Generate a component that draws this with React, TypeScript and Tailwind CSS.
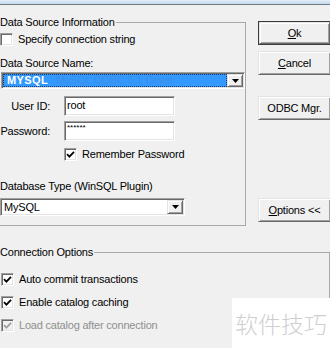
import React from 'react';

const sunken =
  'border border-t-[#a0a0a0] border-l-[#a0a0a0] border-r-white border-b-white shadow-[inset_1px_1px_0_#696969,inset_-1px_-1px_0_#e3e3e3]';
const raised =
  'border border-t-[#e3e3e3] border-l-[#e3e3e3] border-r-[#696969] border-b-[#696969] shadow-[inset_1px_1px_0_#ffffff,inset_-1px_-1px_0_#a0a0a0]';

const Check: React.FC<{ checked?: boolean; disabled?: boolean }> = ({ checked, disabled }) => (
  <div
    className={`w-[13px] h-[13px] shrink-0 flex items-center justify-center ${sunken} ${
      disabled ? 'bg-[#f0f0f0]' : 'bg-white'
    }`}
  >
    {checked && (
      <svg width="9" height="9" viewBox="0 0 9 9">
        <path
          d="M1 4.2 L3.4 6.6 L8 1.8"
          fill="none"
          stroke={disabled ? '#a0a0a0' : '#000'}
          strokeWidth="1.8"
        />
      </svg>
    )}
  </div>
);

const CheckRow: React.FC<{ label: string; checked?: boolean; disabled?: boolean }> = ({
  label,
  checked,
  disabled,
}) => (
  <div className="flex items-center h-[13px] gap-[5px]">
    <Check checked={checked} disabled={disabled} />
    <span className={`leading-[13px] ${disabled ? 'text-[#8f8f8f]' : 'text-black'}`}>{label}</span>
  </div>
);

const Arrow: React.FC = () => (
  <div className={`w-[16px] h-full shrink-0 flex items-center justify-center bg-[#f0f0f0] ${raised}`}>
    <svg width="7" height="4" viewBox="0 0 7 4">
      <path d="M0 0 H7 L3.5 4 Z" fill="#000" />
    </svg>
  </div>
);

const Button: React.FC<{ children: React.ReactNode; def?: boolean; className?: string }> = ({
  children,
  def,
  className = '',
}) => (
  <div
    className={`w-[73px] h-[24px] flex items-center justify-center bg-[#f0f0f0] ${
      def ? 'border border-[#3c3c3c]' : ''
    } ${className}`}
  >
    <div className={`w-full h-full flex items-center justify-center ${raised}`}>{children}</div>
  </div>
);

export default function App() {
  return (
    <div className="w-[330px] h-[348px] bg-[#f0f0f0] relative overflow-hidden text-[11px] tracking-[-0.2px] text-black font-['Liberation_Sans',Arial,sans-serif]">
      {/* window edge */}
      <div className="h-[4px] bg-gradient-to-b from-[#e2edf8] to-[#c4d9ee]" />
      <div className="h-px bg-[#707b88]" />

      <div className="flex items-start">
        {/* Data Source Information */}
        <fieldset className="mt-[11px] w-[249px] border border-l-0 border-[#a9a9a9] pb-[9px]">
          <legend className="pr-[1px] leading-[13px]">Data Source Information</legend>
          <div className="mt-[4px]">
            <CheckRow label="Specify connection string" />
          </div>
          <div className="mt-[11px] leading-[13px]">Data Source Name:</div>
          <div className={`mt-[2px] ml-[1px] w-[244px] h-[17px] flex bg-white ${sunken} p-[1px]`}>
            <div className="flex-1 bg-[#3399ff] border border-dotted border-[#173a6e] flex items-center pl-[3px] overflow-hidden whitespace-nowrap">
              <span className="font-bold text-white tracking-[0.4px]">MYSQL</span>
              <span className="ml-[8px] text-[#3f8ee6]">MySQL ODBC 5.1 Driver</span>
            </div>
            <Arrow />
          </div>

          <div className="mt-[7px] flex items-center">
            <span className="w-[50px] text-right leading-[13px]">User ID:</span>
            <div className={`ml-[14px] w-[111px] h-[20px] bg-white ${sunken} pl-[2px] pt-[2px] leading-[13px]`}>
              root
            </div>
          </div>
          <div className="mt-[5px] flex items-center">
            <span className="w-[50px] text-right leading-[13px]">Password:</span>
            <div className={`ml-[14px] w-[111px] h-[20px] bg-white ${sunken} pl-[2px] leading-[11px] text-[8px] tracking-[0px]`}>
              ******
            </div>
          </div>
          <div className="mt-[7px] pl-[64px]">
            <CheckRow label="Remember Password" checked />
          </div>

          <div className="mt-[19px] leading-[13px]">Database Type (WinSQL Plugin)</div>
          <div className={`mt-[5px] w-[185px] h-[18px] flex bg-white ${sunken} p-[1px]`}>
            <div className="flex-1 flex items-center pl-[2px]">MySQL</div>
            <Arrow />
          </div>
        </fieldset>

        {/* buttons */}
        <div className="ml-[12px] mt-[16px] flex flex-col">
          <Button def>
            <span>
              <span className="underline">O</span>k
            </span>
          </Button>
          <Button className="mt-[6px]">
            <span>
              <span className="underline">C</span>ancel
            </span>
          </Button>
          <Button className="mt-[21px]">ODBC Mgr.</Button>
          <Button className="mt-[78px]">
            <span>
              <span className="underline">O</span>ptions &lt;&lt;
            </span>
          </Button>
        </div>
      </div>

      {/* Connection Options */}
      <fieldset className="mt-[20px] w-[330px] border border-l-0 border-[#a9a9a9] pb-[40px]">
        <legend className="pr-[1px] leading-[13px]">Connection Options</legend>
        <div className="mt-[14px] pl-[1px] flex flex-col gap-[10px]">
          <CheckRow label="Auto commit transactions" checked />
          <CheckRow label="Enable catalog caching" checked />
          <CheckRow label="Load catalog after connection" checked disabled />
        </div>
      </fieldset>

      {/* watermark */}
      <div className="absolute right-0 bottom-0 w-[98px] h-[50px] bg-white flex items-center justify-center">
        <span className="text-[23px] tracking-[0px] text-[#cfcfcf] font-['Noto_Sans_CJK_SC',sans-serif] font-light">
          软件技巧
        </span>
      </div>
    </div>
  );
}
